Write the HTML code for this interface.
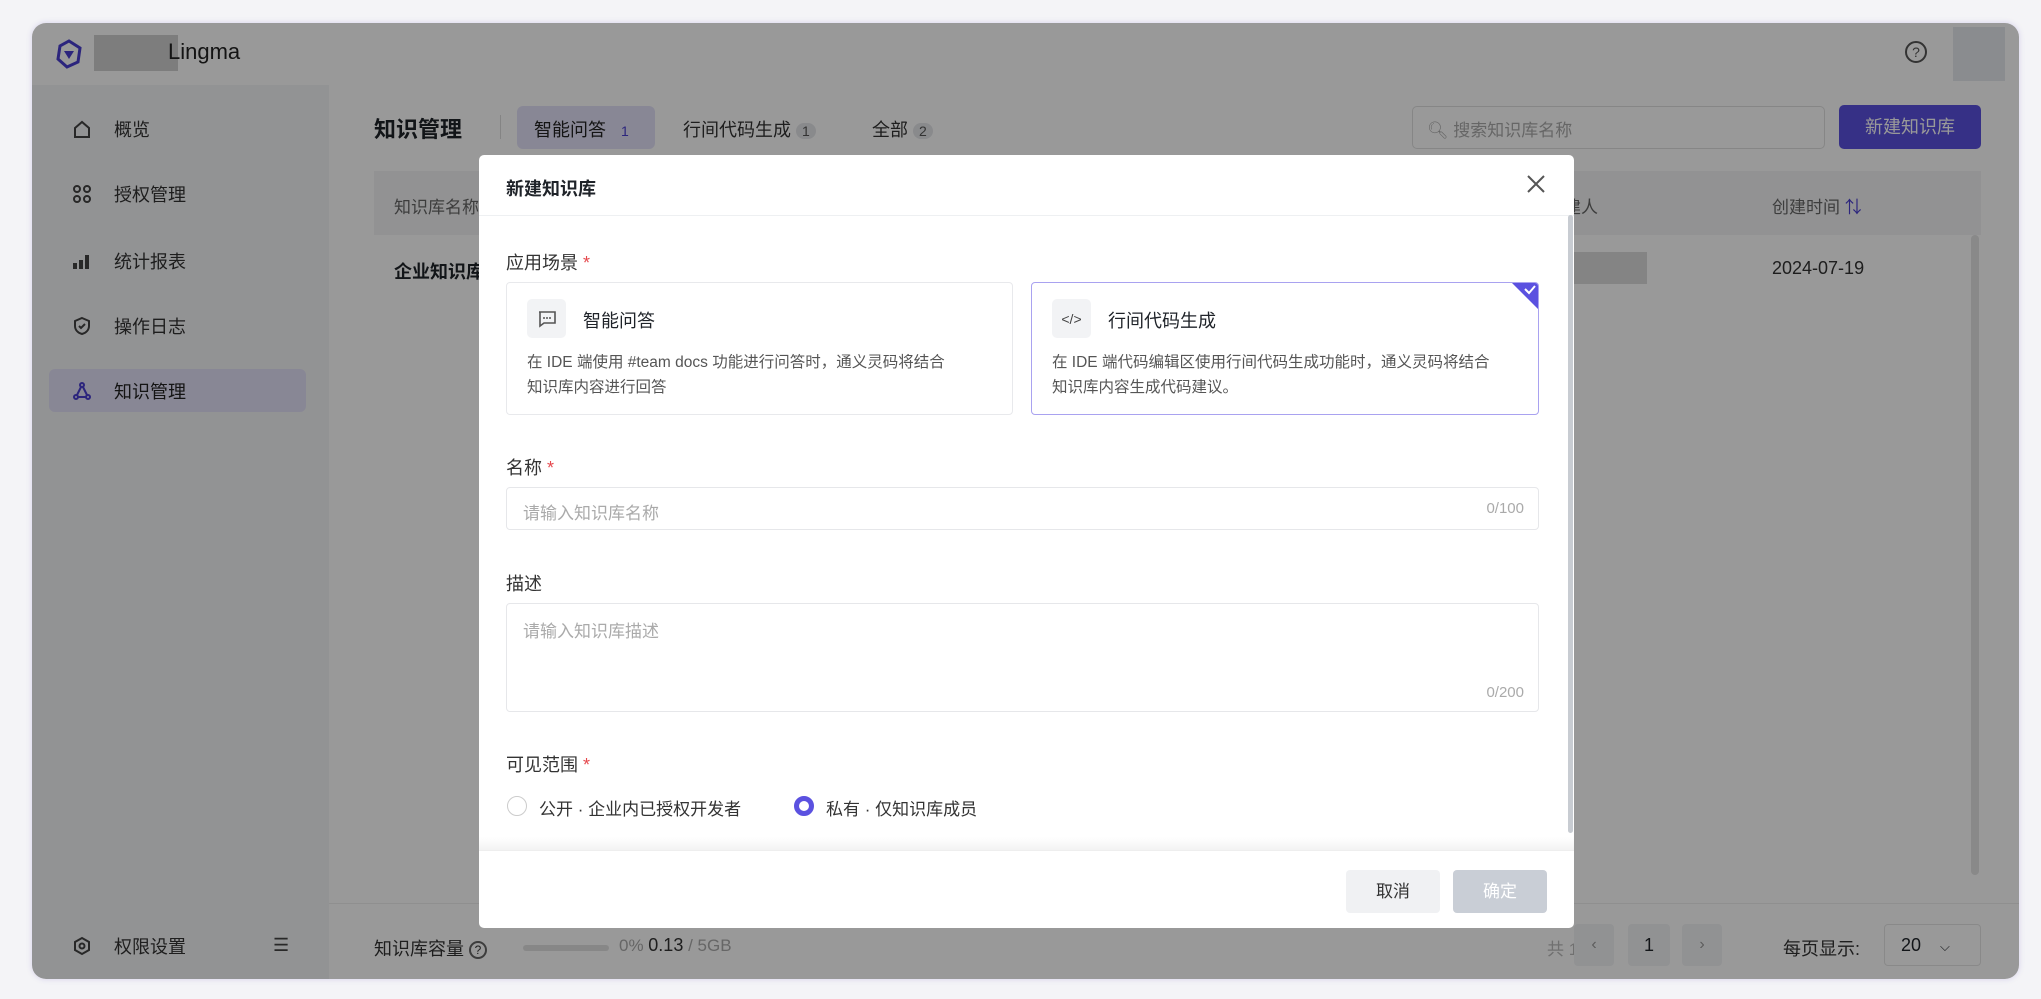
<!DOCTYPE html>
<html><head><meta charset="utf-8"><style>
*{box-sizing:border-box;margin:0;padding:0}
body{width:2041px;height:999px;background:#f4f4f7;font-family:"Liberation Sans","Noto Sans CJK SC",sans-serif;color:#1f2329;position:relative;overflow:hidden}
.a{position:absolute}
.frame{left:32px;top:23px;width:1987px;height:956px;border-radius:14px;overflow:hidden;background:#fff;box-shadow:0 0 6px rgba(120,100,200,.25)}
.hdr{left:0;top:0;width:100%;height:62px;background:#fff}
.side{left:0;top:62px;width:297px;height:894px;background:#f4f5f7}
.main{left:297px;top:62px;width:1690px;height:894px;background:#fff}
.si{left:40px;font-size:18px;color:#333;display:flex;align-items:center}
.si svg{margin-right:22px}
.mask{left:0;top:0;width:100%;height:100%;background:rgba(0,0,0,.4)}
.modal{left:479px;top:155px;width:1095px;height:773px;background:#fff;border-radius:5px}
.lbl{font-size:18px;color:#333}
.req{color:#e5484d}
.card{border:1px solid #e8e9ec;border-radius:4px}
.ib{width:39px;height:39px;background:#f2f3f5;border-radius:5px;display:flex;align-items:center;justify-content:center}
.ct{font-size:18px;color:#1f2329}
.cd{font-size:15.5px;color:#555;line-height:25px}
.inp{border:1px solid #e6e7ea;border-radius:4px}
.ph{font-size:17px;color:#aaa}
</style></head><body>
<div class="a frame">
  <div class="a hdr">
    <svg class="a" style="left:22px;top:16px" width="30" height="30" viewBox="0 0 30 30"><path d="M15 2 L26 9 L24 23 L13 28 L4 20 L6 7 Z" fill="none" stroke="#4a3fd0" stroke-width="3"/><path d="M10 12 L20 12 L15 20Z" fill="#4a3fd0"/></svg>
    <div class="a" style="left:62px;top:12px;width:84px;height:36px;background:#d0d0d0"></div>
    <div class="a" style="left:136px;top:16px;font-size:22px;color:#222">Lingma</div>
    <div class="a" style="left:1873px;top:18px;width:22px;height:22px;border:2px solid #555;border-radius:50%;font-size:14px;text-align:center;line-height:18px;color:#555">?</div>
    <div class="a" style="left:1921px;top:4px;width:52px;height:54px;background:#e6e9ef"></div>
  </div>
  <div class="a side">
    <div class="a si" style="top:31px"><svg width="20" height="20"><path d="M3 9 L10 3 L17 9 V18 H3Z" fill="none" stroke="#444" stroke-width="2"/></svg>概览</div>
    <div class="a si" style="top:96px"><svg width="20" height="20"><g fill="none" stroke="#444" stroke-width="2"><circle cx="5" cy="5" r="3"/><circle cx="15" cy="5" r="3"/><circle cx="5" cy="15" r="3"/><circle cx="15" cy="15" r="3"/></g></svg>授权管理</div>
    <div class="a si" style="top:163px"><svg width="20" height="20"><g fill="#444"><rect x="1" y="12" width="4" height="6"/><rect x="7" y="9" width="4" height="9"/><rect x="13" y="4" width="4" height="14"/></g></svg>统计报表</div>
    <div class="a si" style="top:228px"><svg width="20" height="20"><path d="M10 2 L17 5 V10 C17 14 14 17 10 18 C6 17 3 14 3 10 V5Z M7 10 L9 12 L13 8" fill="none" stroke="#444" stroke-width="2"/></svg>操作日志</div>
    <div class="a" style="left:17px;top:284px;width:257px;height:43px;background:#e3e1f8;border-radius:6px"></div>
    <div class="a si" style="top:293px;color:#222"><svg width="20" height="20"><g fill="none" stroke="#4a3fd0" stroke-width="2"><circle cx="10" cy="4" r="2"/><circle cx="4" cy="16" r="2"/><circle cx="16" cy="16" r="2"/><path d="M9 6 L5 14 M11 6 L15 14 M6 16 H14"/></g></svg>知识管理</div>
    <div class="a si" style="top:848px"><svg width="20" height="20"><path d="M10 2 L17 6 V14 L10 18 L3 14 V6Z" fill="none" stroke="#444" stroke-width="2"/><circle cx="10" cy="10" r="2.5" fill="none" stroke="#444" stroke-width="2"/></svg>权限设置</div>
    <div class="a" style="left:241px;top:850px;font-size:18px;color:#444">☰</div>
  </div>
  <div class="a main" style="height:894px">
    <div class="a" style="left:45px;top:27px;font-size:22px;font-weight:bold;color:#1f2329">知识管理</div>
    <div class="a" style="left:171px;top:30px;width:1px;height:24px;background:#ddd"></div>
    <div class="a" style="left:188px;top:21px;width:138px;height:43px;background:#e3e1f8;border-radius:6px"></div>
    <div class="a" style="left:205px;top:31px;font-size:18px;color:#222">智能问答 <span style="color:#4a3fd0;font-size:14px;margin-left:10px">1</span></div>
    <div class="a" style="left:354px;top:31px;font-size:18px;color:#333">行间代码生成 <span style="background:#e5e6ea;border-radius:9px;padding:0 6px;font-size:14px;color:#555">1</span></div>
    <div class="a" style="left:543px;top:31px;font-size:18px;color:#333">全部 <span style="background:#e5e6ea;border-radius:9px;padding:0 6px;font-size:14px;color:#555">2</span></div>
    <div class="a" style="left:1083px;top:21px;width:413px;height:43px;border:1px solid #e0e0e0;border-radius:5px"></div>
    <div class="a" style="left:1098px;top:31px;font-size:17px;color:#aaa">🔍︎ 搜索知识库名称</div>
    <div class="a" style="left:1510px;top:20px;width:142px;height:44px;background:#5b51e0;border-radius:5px;color:#fff;font-size:18px;text-align:center;line-height:44px">新建知识库</div>
    <div class="a" style="left:45px;top:86px;width:1607px;height:64px;background:#f3f4f6"></div>
    <div class="a" style="left:65px;top:108px;font-size:17px;color:#666">知识库名称</div>
    <div class="a" style="left:1218px;top:108px;font-size:17px;color:#666">创建人</div>
    <div class="a" style="left:1443px;top:108px;font-size:17px;color:#666">创建时间 <span style="color:#4a3fd0">⇅</span></div>
    <div class="a" style="left:65px;top:173px;font-size:18px;font-weight:bold">企业知识库</div>
    <div class="a" style="left:1238px;top:167px;width:80px;height:32px;background:#ddd"></div>
    <div class="a" style="left:1443px;top:173px;font-size:18px;color:#333">2024-07-19</div>
    <div class="a" style="left:1642px;top:150px;width:8px;height:640px;background:#e4e4e4;border-radius:4px"></div>
    <div class="a" style="left:0;top:818px;width:1690px;height:1px;background:#eee"></div>
    <div class="a" style="left:45px;top:850px;font-size:18px;color:#333">知识库容量 <span style="display:inline-block;width:18px;height:18px;border:2px solid #666;border-radius:50%;font-size:12px;text-align:center;line-height:14px;vertical-align:middle">?</span></div>
    <div class="a" style="left:194px;top:860px;width:86px;height:6px;background:#e2e2e2;border-radius:3px"></div>
    <div class="a" style="left:290px;top:850px;font-size:17px;color:#aaa">0% <span style="color:#333;font-size:18px">0.13</span> / 5GB</div>
    <div class="a" style="left:1218px;top:850px;font-size:17px;color:#bbb">共 1 条</div>
    <div class="a" style="left:1245px;top:839px;width:40px;height:42px;background:#f2f3f5;border-radius:4px;text-align:center;line-height:42px;color:#999">‹</div>
    <div class="a" style="left:1299px;top:839px;width:42px;height:42px;background:#f2f3f5;border-radius:4px;text-align:center;line-height:42px;font-size:18px">1</div>
    <div class="a" style="left:1353px;top:839px;width:40px;height:42px;background:#f2f3f5;border-radius:4px;text-align:center;line-height:42px;color:#999">›</div>
    <div class="a" style="left:1454px;top:850px;font-size:18px;color:#333">每页显示:</div>
    <div class="a" style="left:1555px;top:839px;width:97px;height:42px;border:1px solid #e5e5e5;border-radius:4px;font-size:18px;line-height:40px;padding-left:16px">20 <span style="margin-left:14px;font-size:13px">⌵</span></div>
  </div>
  <div class="a mask"></div>
</div>
<div class="a modal">
  <div class="a" style="left:27px;top:20px;font-size:18px;font-weight:bold;color:#1f2329">新建知识库</div>
  <svg class="a" style="left:1047px;top:19px" width="20" height="20"><path d="M2 2 L18 18 M18 2 L2 18" stroke="#555" stroke-width="2"/></svg>
  <div class="a" style="left:0;top:60px;width:1095px;height:1px;background:#eef0f2"></div>
  <div class="a lbl" style="left:27px;top:94px">应用场景 <span class="req">*</span></div>
  <div class="a card" style="left:27px;top:127px;width:507px;height:133px">
    <div class="a ib" style="left:20px;top:16px"><svg width="20" height="18"><path d="M2 2 H18 V13 H7 L3 16 V2Z" fill="none" stroke="#555" stroke-width="1.6"/><g fill="#555"><circle cx="7" cy="8" r="1"/><circle cx="10" cy="8" r="1"/><circle cx="13" cy="8" r="1"/></g></svg></div>
    <div class="a ct" style="left:76px;top:24px">智能问答</div>
    <div class="a cd" style="left:20px;top:67px">在 IDE 端使用 #team docs 功能进行问答时，通义灵码将结合<br>知识库内容进行回答</div>
  </div>
  <div class="a card" style="left:552px;top:127px;width:508px;height:133px;border-color:#a9a2f0;overflow:hidden">
    <div class="a ib" style="left:20px;top:16px;font-size:14px;color:#444">&lt;/&gt;</div>
    <div class="a ct" style="left:76px;top:24px">行间代码生成</div>
    <div class="a cd" style="left:20px;top:67px">在 IDE 端代码编辑区使用行间代码生成功能时，通义灵码将结合<br>知识库内容生成代码建议。</div>
    <svg class="a" style="right:0;top:0" width="30" height="30"><path d="M4 0 H30 V26Z" fill="#5b51e0"/><path d="M17 6 L21 10 L27 3" stroke="#fff" stroke-width="2" fill="none"/></svg>
  </div>
  <div class="a lbl" style="left:27px;top:299px">名称 <span class="req">*</span></div>
  <div class="a inp" style="left:27px;top:332px;width:1033px;height:43px"><span class="a ph" style="left:16px;top:11px">请输入知识库名称</span><span class="a" style="right:14px;top:12px;font-size:15px;color:#aaa">0/100</span></div>
  <div class="a lbl" style="left:27px;top:415px">描述</div>
  <div class="a inp" style="left:27px;top:448px;width:1033px;height:109px"><span class="a ph" style="left:16px;top:13px">请输入知识库描述</span><span class="a" style="right:14px;bottom:10px;font-size:15px;color:#aaa">0/200</span></div>
  <div class="a lbl" style="left:27px;top:596px">可见范围 <span class="req">*</span></div>
  <div class="a" style="left:28px;top:641px;width:20px;height:20px;border:1px solid #ccc;border-radius:50%"></div>
  <div class="a" style="left:60px;top:640px;font-size:17px;color:#333">公开 · 企业内已授权开发者</div>
  <div class="a" style="left:315px;top:641px;width:20px;height:20px;border:5px solid #5b51e0;border-radius:50%"></div>
  <div class="a" style="left:347px;top:640px;font-size:17px;color:#333">私有 · 仅知识库成员</div>
  <div class="a" style="left:1089px;top:60px;width:5px;height:618px;background:#c8ccd2;border-radius:3px"></div>
  <div class="a" style="left:0;top:682px;width:1095px;height:14px;background:linear-gradient(#fff,#f2f2f2)"></div>
  <div class="a" style="left:0;top:695px;width:1095px;height:1px;background:#eee"></div>
  <div class="a" style="left:867px;top:715px;width:94px;height:43px;background:#f0f1f3;border-radius:4px;text-align:center;line-height:43px;font-size:17px;color:#333">取消</div>
  <div class="a" style="left:974px;top:715px;width:94px;height:43px;background:#c9ced6;border-radius:4px;text-align:center;line-height:43px;font-size:17px;color:#fff">确定</div>
</div>
</body></html>
